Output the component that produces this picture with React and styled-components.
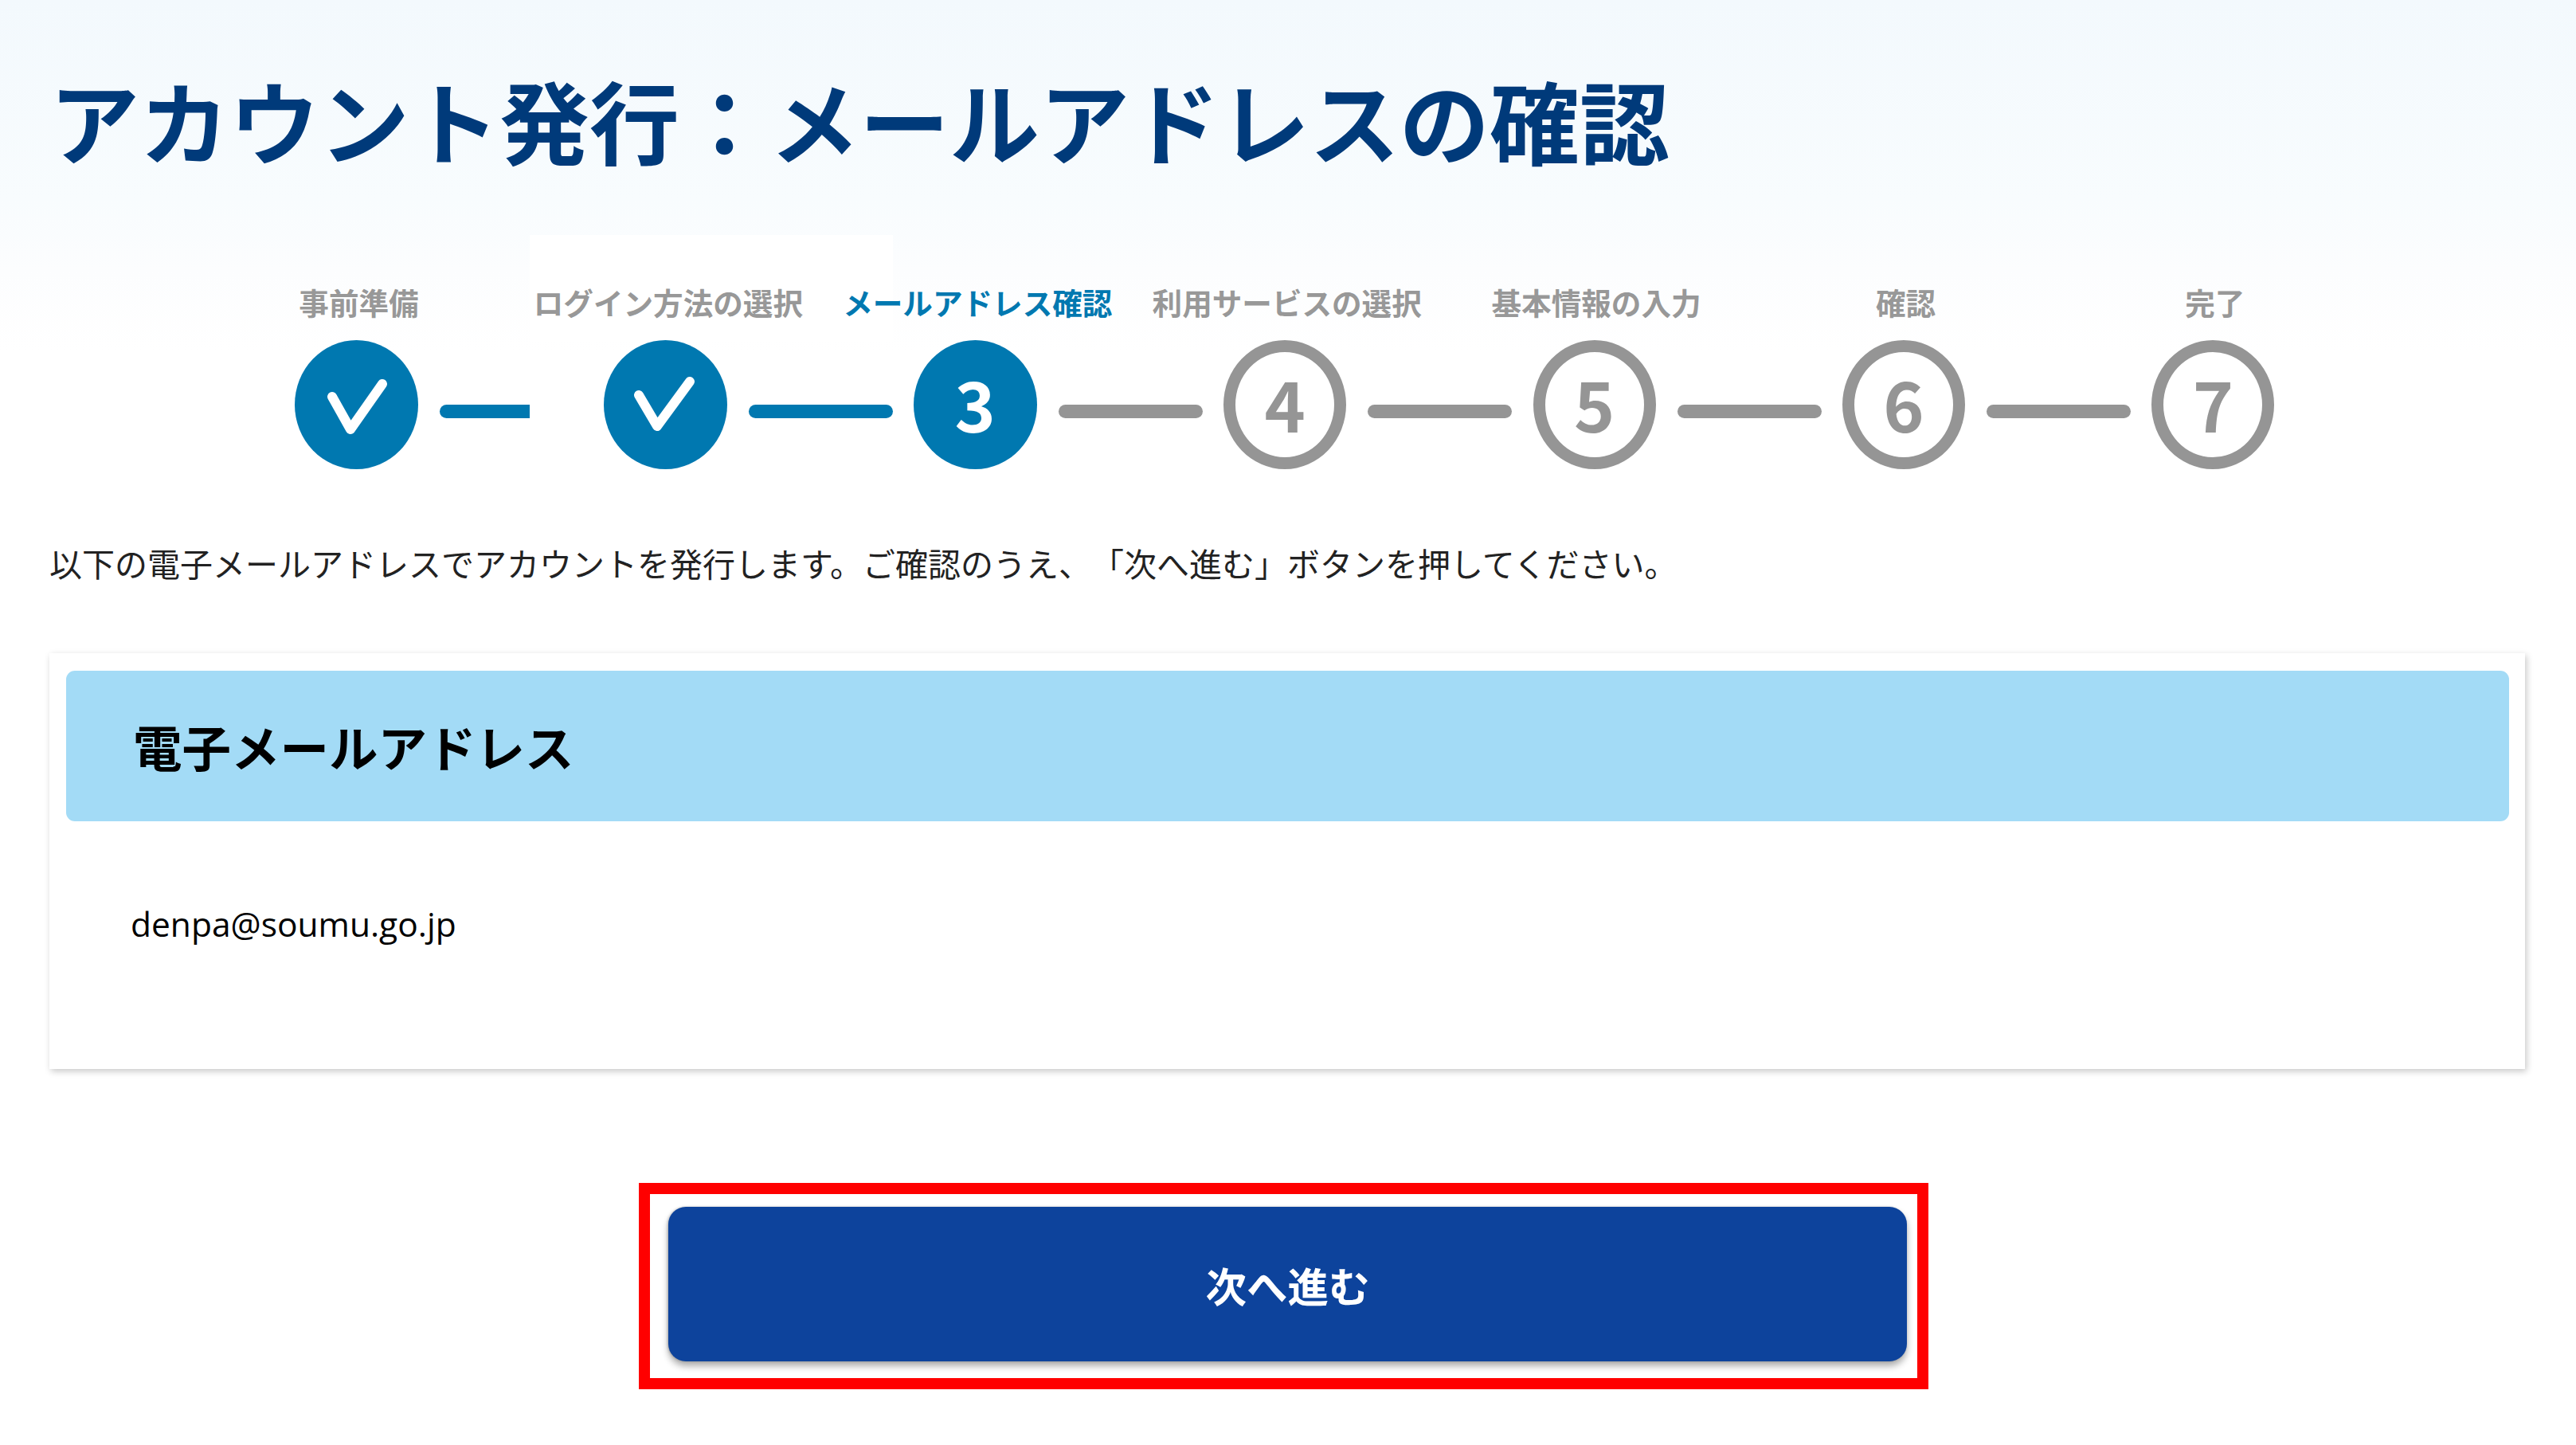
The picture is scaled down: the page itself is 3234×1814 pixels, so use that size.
import React from "react";
import styled, { createGlobalStyle } from "styled-components";

const CJK = `"Noto Sans CJK JP", "Noto Sans", sans-serif`;

const Global = createGlobalStyle`
  html, body { margin: 0; padding: 0; background: #fff; }
  body { font-family: ${CJK}; overflow: hidden; text-spacing-trim: space-all; }
`;

const Page = styled.main`
  position: relative;
  width: 3234px;
  height: 1814px;
  overflow: hidden;
  display: flex;
  flex-direction: column;
  background: linear-gradient(180deg, #f3f9fd 0, #f8fcfe 250px, #fcfdfe 340px, #ffffff 440px);
`;

const PastePatch = styled.div`
  position: absolute;
  left: 665px;
  top: 295px;
  width: 456px;
  height: 135px;
  background: #fff;
`;

const Title = styled.h1`
  position: relative;
  margin: 74px 0 0 62px;
  font-size: 113px;
  line-height: 150px;
  font-weight: 700;
  color: #003a7a;
  white-space: nowrap;
`;

const Stepper = styled.ol`
  position: relative;
  list-style: none;
  margin: 132px 0 0;
  padding: 0 0 0 370px;
  display: flex;
`;

const Step = styled.li`
  width: 388.4px;
  flex: none;
  display: flex;
  flex-direction: column;
`;

const LabelSlot = styled.div`
  width: 155px;
  height: 46px;
  margin-bottom: 25px;
  padding-left: 6px;
  box-sizing: border-box;
  display: flex;
  justify-content: center;
`;

const Label = styled.span`
  flex: none;
  font-size: 37.6px;
  line-height: 46px;
  font-weight: 700;
  white-space: nowrap;
  color: ${(p) => (p.$active ? "#0078b0" : "#989898")};
`;

const Track = styled.div`
  display: flex;
`;

const Circle = styled.div`
  flex: none;
  box-sizing: border-box;
  width: ${(p) => (p.$pending ? 154 : 155)}px;
  height: 162px;
  margin-left: ${(p) => (p.$pending ? 1 : 0)}px;
  padding-bottom: ${(p) => (p.$digit ? 6 : 0)}px;
  border-radius: 50%;
  display: flex;
  align-items: center;
  justify-content: center;
  font-size: 87px;
  line-height: 1;
  font-weight: 700;
  background: ${(p) => (p.$pending ? "#ffffff" : "#0078b0")};
  color: ${(p) => (p.$pending ? "#959595" : "#ffffff")};
  border: ${(p) => (p.$pending ? "15px solid #959595" : "none")};
`;

const CheckIcon = styled.svg`
  display: block;
  width: 155px;
  height: 162px;
`;

const Connector = styled.div`
  flex: none;
  height: 17px;
  margin: 81px 0 0 27px;
  width: ${(p) => (p.$cut ? 113 : 181)}px;
  border-radius: ${(p) => (p.$cut ? "9px 0 0 9px" : "9px")};
  background: ${(p) => (p.$done ? "#0078b0" : "#959595")};
`;

const Intro = styled.p`
  margin: 87px 0 0 62px;
  font-size: 41px;
  line-height: 60px;
  font-weight: 400;
  color: #222;
  white-space: nowrap;
`;

const Card = styled.section`
  box-sizing: border-box;
  width: 3108px;
  height: 522px;
  margin: 84px 0 0 62px;
  padding: 22px 20px 0 21px;
  background: #fff;
  box-shadow: 2px 3px 8px rgba(0, 0, 0, 0.22);
`;

const CardHeader = styled.h2`
  box-sizing: border-box;
  margin: 0;
  height: 189px;
  padding-left: 84px;
  display: flex;
  align-items: center;
  border-radius: 11px;
  background: #a3dbf6;
  color: #000;
  font-size: 61.5px;
  font-weight: 700;
`;

const Email = styled.p`
  margin: 99px 0 0 81px;
  font-family: "Open Sans", sans-serif;
  font-size: 42.5px;
  line-height: 60px;
  color: #000;
`;

const RedFrame = styled.div`
  box-sizing: border-box;
  width: 1619px;
  height: 259px;
  margin: 143px 0 0 802px;
  padding: 16px 13px 21px 23px;
  border: 14px solid #ff0000;
`;

const NextButton = styled.button`
  display: block;
  width: 100%;
  height: 100%;
  border: 0;
  border-radius: 22px;
  background: #0d439c;
  color: #fff;
  font-family: ${CJK};
  font-size: 51.5px;
  font-weight: 700;
  box-shadow: 0 6px 8px rgba(0, 0, 0, 0.32), -1px 0 3px rgba(0, 0, 0, 0.2);
`;

const checks = [
  "M47 71 L70 112 L110 55",
  "M44 69 L67 108 L108 52",
];

const steps = [
  "事前準備",
  "ログイン方法の選択",
  "メールアドレス確認",
  "利用サービスの選択",
  "基本情報の入力",
  "確認",
  "完了",
];

export default function App() {
  return (
    <Page>
      <Global />
      <PastePatch />
      <Title>{"アカウント発行\uFF1Aメールアドレスの確認"}</Title>
      <Stepper>
        {steps.map((label, i) => {
          const n = i + 1;
          const pending = n > 3;
          return (
            <Step key={label}>
              <LabelSlot>
                <Label $active={n === 3}>{label}</Label>
              </LabelSlot>
              <Track>
                <Circle $pending={pending} $digit={n >= 3}>
                  {n < 3 ? (
                    <CheckIcon viewBox="0 0 155 162">
                      <path
                        d={checks[i]}
                        fill="none"
                        stroke="#fff"
                        strokeWidth="12"
                        strokeLinecap="round"
                        strokeLinejoin="round"
                      />
                    </CheckIcon>
                  ) : (
                    n
                  )}
                </Circle>
                {n < 7 && <Connector $done={n < 3} $cut={n === 1} />}
              </Track>
            </Step>
          );
        })}
      </Stepper>
      <Intro>以下の電子メールアドレスでアカウントを発行します。ご確認のうえ、「次へ進む」ボタンを押してください。</Intro>
      <Card>
        <CardHeader>電子メールアドレス</CardHeader>
        <Email>denpa@soumu.go.jp</Email>
      </Card>
      <RedFrame>
        <NextButton>次へ進む</NextButton>
      </RedFrame>
    </Page>
  );
}
